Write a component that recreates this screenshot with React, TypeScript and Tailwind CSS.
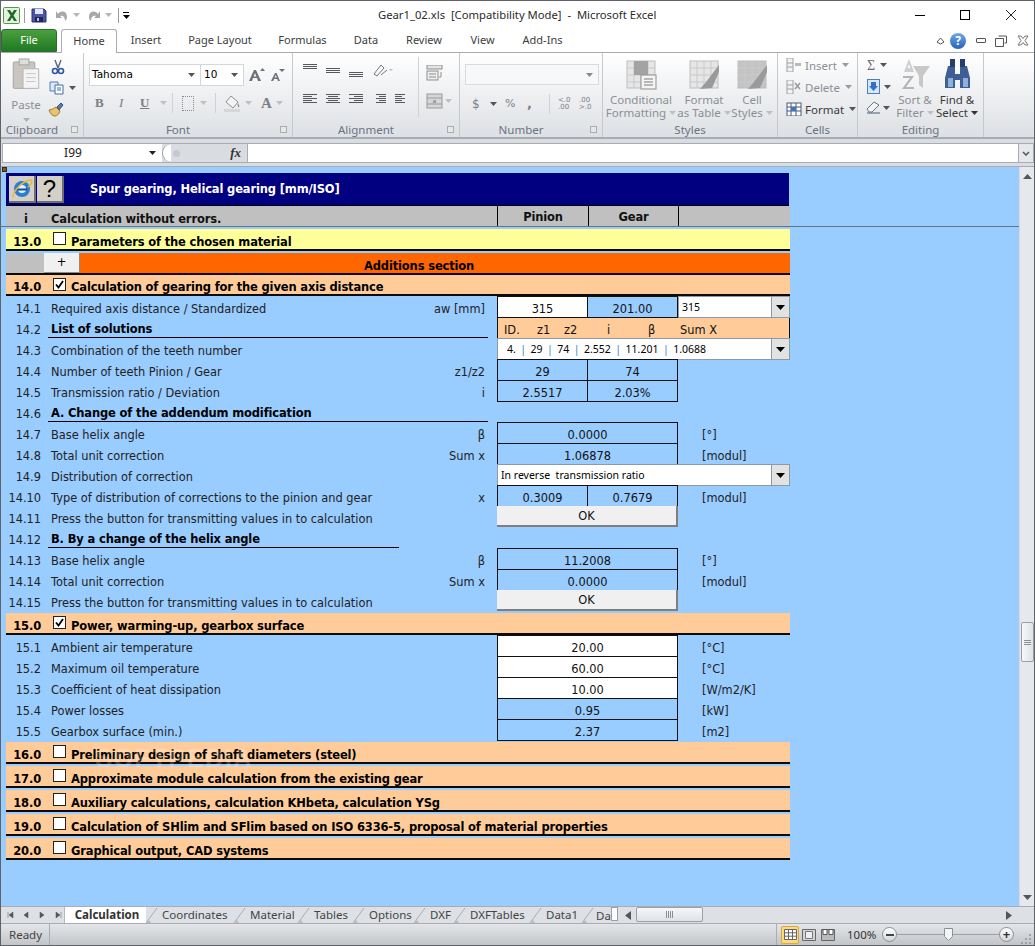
import type { ReactNode } from 'react';

// small drawn icons
const Caret = ({ cls = 'text-[#6b6b6b]' }: { cls?: string }) => (
  <svg width="7" height="4" viewBox="0 0 7 4" className={cls}><path d="M0 0h7L3.5 4z" fill="currentColor" /></svg>
);

const Lines = ({ rows }: { rows: number[][] }) => (
  <svg width="16" height="14" viewBox="0 0 16 14">
    {rows.map((r, i) => (
      <rect key={i} x={r[0]} y={r[2]} width={r[1]} height="1" fill="#55595e" />
    ))}
  </svg>
);

const StyleGrid = ({ brush, tint }: { brush?: boolean; tint?: boolean }) => (
  <svg width="32" height="30" viewBox="0 0 32 30">
    <rect x="2" y="1" width="28" height="27" fill={tint ? '#c4c4c4' : '#e6e6e6'} stroke="#bdbdbd" />
    {[9, 16, 23].map((x) => <path key={x} d={`M${x} 1v27`} stroke="#c9c9c9" />)}
    {[8, 15, 22].map((y) => <path key={y} d={`M2 ${y}h28`} stroke="#c9c9c9" />)}
    {!brush && <rect x="9" y="1" width="14" height="14" fill="#a3a3a3" />}
    {!brush && <rect x="16" y="15" width="15" height="14" fill="#f4f4f4" stroke="#8f8f8f" />}
    {!brush && <path d="M19 19h9M19 22h9M19 25h9" stroke="#7d7d7d" />}
    {brush && <path d="M31 5 L18 22 L12 29 L24 28 L31 12z" fill="#9a9a9a" />}
  </svg>
);

function Group({ w, label, launcher, children }: { w: string; label: string; launcher?: boolean; children: ReactNode }) {
  return (
    <div className={`${w} flex shrink-0 flex-col border-r border-[#c5c9ce]`}>
      <div className="flex h-[71px] min-h-0">{children}</div>
      <div className={`relative flex h-[15px] items-center justify-center text-[11.5px] leading-none text-[#6b7280] ${launcher ? 'pr-[20px]' : ''}`}>
        {label}
        {launcher && <span className="absolute right-[5px] top-[4px] h-[7px] w-[7px] border border-[#a9adb3] bg-[#e8e8e8]" />}
      </div>
    </div>
  );
}

const RibbonText = ({ children, dark }: { children: ReactNode; dark?: boolean }) => (
  <span className={`whitespace-nowrap text-[11.5px] leading-[13px] ${dark ? 'text-[#3a3a3a]' : 'text-[#8b8f94]'}`}>{children}</span>
);

function Ribbon() {
  return (
    <div className="flex h-[86px] shrink-0 border-b-2 border-[#a9adb3] bg-gradient-to-b from-white to-[#dde0e4] font-['Noto_Sans',sans-serif]">
      <Group w="w-[83px]" label="Clipboard" launcher>
        <div className="flex w-[50px] flex-col items-center pt-[5px]">
          <svg width="28" height="32" viewBox="0 0 28 32">
            <rect x="1" y="4" width="22" height="27" rx="1" fill="#c9c5c0" stroke="#a8a5a1" />
            <rect x="7" y="1" width="10" height="6" fill="#dedede" stroke="#a8a5a1" />
            <path d="M11 11h16v20H11z" fill="#f4f4f4" stroke="#b5b5b5" />
            <path d="M14 16h10M14 20h10M14 24h10" stroke="#c8c8c8" />
          </svg>
          <div className="mt-[2px]"><RibbonText>Paste</RibbonText></div>
          <div className="mt-[3px]"><Caret cls="text-[#b0b0b0]" /></div>
        </div>
        <div className="flex flex-col gap-[6px] pt-[6px]">
          <svg width="14" height="16" viewBox="0 0 14 16">
            <path d="M4 1l3 8M10 1L7 9" stroke="#54647c" strokeWidth="1.4" fill="none" />
            <circle cx="4" cy="12" r="2.5" fill="none" stroke="#2f55a4" strokeWidth="1.6" />
            <circle cx="10" cy="12" r="2.5" fill="none" stroke="#2f55a4" strokeWidth="1.6" />
          </svg>
          <div className="flex items-center gap-[4px] -ml-[2px]">
            <svg width="16" height="14" viewBox="0 0 16 14">
              <path d="M1 1h8v9H1z" fill="#dce9f7" stroke="#4f7fb8" />
              <path d="M6 4h8v9H6z" fill="#fff" stroke="#3f6da8" />
              <path d="M8 7h4M8 9h4" stroke="#3f6da8" />
            </svg>
            <Caret cls="text-[#555]" />
          </div>
          <svg width="17" height="16" viewBox="0 0 17 16" className="-ml-[3px]">
            <path d="M1 9c3 0 5-2 7-3l4 4c-1 3-3 5-5 5-3 0-5-3-6-6z" fill="#e8c56a" stroke="#a07f2c" />
            <path d="M9 6l4-4 2 2-4 5z" fill="#5b7bb0" stroke="#33507f" />
          </svg>
        </div>
      </Group>

      <Group w="w-[209px]" label="Font" launcher>
        <div className="flex flex-col gap-[7px] pl-[5px] pt-[11px]">
          <div className="flex items-center">
            <div className="flex h-[22px] w-[112px] items-center justify-between border border-[#d3d6da] bg-white pl-[2px] pr-[5px] font-['DejaVu_Sans',sans-serif] text-[10.5px] text-black">Tahoma<Caret cls="text-[#555]" /></div>
            <div className="flex h-[22px] w-[43px] items-center justify-between border border-l-0 border-[#d3d6da] bg-white pl-[3px] pr-[5px] font-['DejaVu_Sans',sans-serif] text-[10.5px] text-black">10<Caret cls="text-[#555]" /></div>
            <svg width="17" height="14" viewBox="0 0 17 14" className="ml-[4px]">
              <path d="M1 13L6 2h2l5 11h-3l-1-3H5l-1 3zM5.600 8.500h2.800L7 5z" fill="#6d7278" />
              <path d="M12 3l2.500-3L17 3z" fill="#6d7278" />
            </svg>
            <svg width="15" height="13" viewBox="0 0 15 13" className="ml-[5px]">
              <path d="M1 12L5 4h1.500L10 12H8l-.7-2H4l-.8 2zM4.500 8.500h2.300L5.700 6z" fill="#6d7278" />
              <path d="M9 0h6l-3 3z" fill="#6d7278" />
            </svg>
          </div>
          <div className="flex items-center pl-[6px] text-[#7b7f85]">
            <span className="w-[24px] font-['Liberation_Serif',serif] text-[13px] font-bold">B</span>
            <span className="w-[21px] font-['Liberation_Serif',serif] text-[13px] italic">I</span>
            <span className="w-[20px] font-['Liberation_Serif',serif] text-[13px] font-bold underline">U</span>
            <Caret cls="text-[#c0c0c0]" />
            <span className="mx-[5px] h-[20px] w-px bg-[#cfd2d6]" />
            <span className="ml-[4px] mr-[6px] h-[15px] w-[12px] border border-dotted border-[#8b8b8b]" />
            <Caret cls="text-[#c0c0c0]" />
            <span className="mx-[8px] h-[20px] w-px bg-[#cfd2d6]" />
            <svg width="17" height="17" viewBox="0 0 17 17">
              <path d="M7 1l7 6-5 6-7-6z" fill="#f4f4f4" stroke="#8f8f8f" />
              <path d="M14 8c1 2 2 3 1 4s-2-2-1-4z" fill="#909090" />
              <rect x="0" y="14" width="16" height="3" fill="#d6d6d6" />
            </svg>
            <span className="ml-[4px] mr-[9px]"><Caret cls="text-[#c0c0c0]" /></span>
            <span className="font-['Liberation_Serif',serif] text-[15px] font-bold leading-none">A</span>
            <span className="ml-[4px]"><Caret cls="text-[#c0c0c0]" /></span>
          </div>
        </div>
      </Group>

      <Group w="w-[167px]" label="Alignment" launcher>
        <div className="flex flex-col gap-[15px] pl-[9px] pt-[10px]">
          <div className="flex items-center gap-[7px]">
            <Lines rows={[[1, 14, 1], [1, 14, 3], [1, 14, 5]]} />
            <Lines rows={[[1, 14, 5], [1, 14, 7], [1, 14, 9]]} />
            <Lines rows={[[1, 14, 9], [1, 14, 11], [1, 14, 13]]} />
            <svg width="24" height="14" viewBox="0 0 24 14" className="ml-[1px]">
              <path d="M2 11L9 2l3 3-7 8zM9 12l6-5" stroke="#73777d" fill="none" />
              <path d="M17 6l4 0-2 2z" fill="#b9b9b9" />
            </svg>
          </div>
          <div className="flex items-center gap-[7px]">
            <Lines rows={[[1, 14, 2], [1, 9, 4], [1, 14, 6], [1, 9, 8], [1, 14, 10]]} />
            <Lines rows={[[1, 14, 2], [3, 10, 4], [1, 14, 6], [3, 10, 8], [1, 14, 10]]} />
            <Lines rows={[[1, 14, 2], [6, 9, 4], [1, 14, 6], [6, 9, 8], [1, 14, 10]]} />
            <Lines rows={[[5, 10, 2], [8, 7, 4], [5, 10, 6], [8, 7, 8], [5, 10, 10]]} />
            <Lines rows={[[1, 10, 2], [1, 7, 4], [1, 10, 6], [1, 7, 8], [1, 10, 10]]} />
          </div>
        </div>
        <div className="ml-auto mt-[4px] h-[60px] w-px bg-[#cfd2d6]" />
        <div className="flex w-[40px] flex-col gap-[12px] pl-[7px] pt-[12px]">
          <svg width="17" height="16" viewBox="0 0 17 16">
            <rect x="1" y="0" width="15" height="4" fill="#e4e4e4" stroke="#8f8f8f" />
            <rect x="1" y="6" width="11" height="9" fill="#eee" stroke="#8f8f8f" />
            <path d="M3 9h7M3 12h7" stroke="#8f8f8f" />
            <path d="M15 7v5h-2" stroke="#8f8f8f" fill="none" />
          </svg>
          <div className="flex items-center gap-[2px]">
            <svg width="17" height="16" viewBox="0 0 17 16">
              <rect x="1" y="1" width="15" height="14" fill="#d6d6d6" stroke="#9a9a9a" />
              <path d="M1 5h15M1 11h15" stroke="#9a9a9a" />
              <text x="8.5" y="10" fontSize="6" textAnchor="middle" fill="#666">a</text>
            </svg>
            <Caret cls="text-[#c0c0c0]" />
          </div>
        </div>
      </Group>

      <Group w="w-[143px]" label="Number" launcher>
        <div className="flex w-full flex-col gap-[9px] px-[5px] pt-[11px]">
          <div className="flex h-[21px] w-[134px] items-center justify-end border border-[#d9dcdf] bg-[#f7f8f9] pr-[5px]"><Caret cls="text-[#8a8a8a]" /></div>
          <div className="flex items-center pl-[7px] font-['DejaVu_Sans',sans-serif] text-[#7b7f85]">
            <span className="w-[18px] text-[12px]">$</span>
            <Caret cls="text-[#555]" />
            <span className="ml-[8px] w-[22px] text-[11px]">%</span>
            <span className="w-[22px] text-[13px] font-bold">,</span>
            <span className="h-[20px] w-px bg-[#cfd2d6]" />
            <span className="ml-[8px] w-[21px] text-[7px] leading-[7px]">&lt;.0<br />.00</span>
            <span className="w-[18px] text-[7px] leading-[7px]">.00<br />&gt;.0</span>
          </div>
        </div>
      </Group>

      <Group w="w-[175px]" label="Styles">
        <div className="flex w-full pt-[7px]">
          <div className="flex w-[76px] flex-col items-center"><StyleGrid /><div className="mt-[3px] flex flex-col items-center"><RibbonText>Conditional</RibbonText><span className="flex items-center gap-[3px]"><RibbonText>Formatting</RibbonText><Caret cls="text-[#c0c0c0]" /></span></div></div>
          <div className="flex w-[50px] flex-col items-center"><StyleGrid brush /><div className="mt-[3px] flex flex-col items-center"><RibbonText>Format</RibbonText><span className="flex items-center gap-[3px]"><RibbonText>as Table</RibbonText><Caret cls="text-[#c0c0c0]" /></span></div></div>
          <div className="flex w-[46px] flex-col items-center"><StyleGrid brush tint /><div className="mt-[3px] flex flex-col items-center"><RibbonText>Cell</RibbonText><span className="flex items-center gap-[3px]"><RibbonText>Styles</RibbonText><Caret cls="text-[#c0c0c0]" /></span></div></div>
        </div>
      </Group>

      <Group w="w-[80px]" label="Cells">
        <div className="flex flex-col gap-[8px] pl-[8px] pt-[5px]">
          {['Insert', 'Delete', 'Format'].map((t, i) => (
            <div key={t} className="flex h-[14px] items-center gap-[3px]">
              <svg width="16" height="14" viewBox="0 0 16 14">
                <rect x="1" y={i === 2 ? 1 : 0} width={i === 2 ? 14 : 6} height={i === 2 ? 13 : 14} fill={i === 2 ? '#fff' : '#f2f2f2'} stroke={i === 2 ? '#4a5b78' : '#a0a0a0'} />
                <path d={i === 2 ? 'M1 5h14M1 9h14M5 1v13M10 1v13' : 'M1 5h6M1 9h6'} stroke={i === 2 ? '#4a5b78' : '#a0a0a0'} />
                {i === 2 && <rect x="5" y="5" width="5" height="4" fill="#3f74c4" />}
                {i === 0 && <path d="M9 5h6v3H9z" fill="#b9b9b9" />}
                {i === 1 && <path d="M9 3l5 6M14 3l-5 6" stroke="#9a9a9a" strokeWidth="1.5" />}
              </svg>
              <RibbonText dark={i === 2}>{t}</RibbonText>
              <span className="ml-[2px]"><Caret cls={i === 2 ? 'text-[#555]' : 'text-[#9a9a9a]'} /></span>
            </div>
          ))}
        </div>
      </Group>

      <Group w="w-[126px]" label="Editing">
        <div className="flex w-[37px] flex-col gap-[7px] pl-[9px] pt-[5px]">
          <span className="flex h-[14px] items-center gap-[5px] font-['Liberation_Serif',serif] text-[14px] text-[#6d6d6d]">Σ<Caret cls="text-[#555]" /></span>
          <span className="flex items-center gap-[4px]">
            <svg width="13" height="15" viewBox="0 0 13 15"><rect x="0.5" y="0.5" width="12" height="14" fill="#d7e6f8" stroke="#4f7fb8" /><path d="M4 3h5v4h2l-4.500 5-4.500-5h2z" fill="#2f6fc8" /></svg>
            <Caret cls="text-[#555]" />
          </span>
          <span className="flex items-center gap-[2px] -ml-[1px]">
            <svg width="15" height="13" viewBox="0 0 15 13"><path d="M1 8l7-7 5 3-7 7H3z" fill="#f2f4f6" stroke="#6a7585" /><path d="M1 12h13" stroke="#4a5a70" /></svg>
            <Caret cls="text-[#555]" />
          </span>
        </div>
        <div className="flex w-[40px] flex-col items-center pt-[5px]">
          <svg width="31" height="32" viewBox="0 0 31 32">
            <path d="M9 1l5 13H4zM7.500 10h3L9 6z" fill="#cfcfcf" fillRule="evenodd" />
            <path d="M3 18h11l-8 11h8v2H2l8-11H3z" fill="#b5b5b5" />
            <path d="M13 8h17l-7 10v12l-4-3V18z" fill="#c8c8c8" />
          </svg>
          <div className="mt-[3px] flex flex-col items-center"><RibbonText>Sort &amp;</RibbonText><span className="flex items-center gap-[3px]"><RibbonText>Filter</RibbonText><Caret cls="text-[#c0c0c0]" /></span></div>
        </div>
        <div className="flex w-[44px] flex-col items-center pt-[5px]">
          <svg width="29" height="32" viewBox="0 0 29 32">
            <path d="M5 8h7v8h5V8h7l3 12v10H17v-8h-5v8H2V20z" fill="#3d5f94" />
            <rect x="7" y="1" width="5" height="8" fill="#243f6f" />
            <rect x="17" y="1" width="5" height="8" fill="#243f6f" />
            <path d="M5 20h5v9H5zM20 20h5v9h-5z" fill="#8fb0dc" />
          </svg>
          <div className="mt-[3px] flex flex-col items-center"><RibbonText dark>Find &amp;</RibbonText><span className="flex items-center gap-[3px]"><RibbonText dark>Select</RibbonText><Caret cls="text-[#333]" /></span></div>
        </div>
      </Group>
    </div>
  );
}

function TitleBar() {
  return (
    <div className="flex h-[28px] shrink-0 items-center bg-white pl-[2px] font-['Noto_Sans',sans-serif]">
      <svg width="17" height="17" viewBox="0 0 17 17">
        <rect x="0.500" y="0.500" width="16" height="16" rx="1" fill="#e4f1dd" stroke="#4e9a45" />
        <path d="M4 3h3l2 3 2-3h3l-3.500 5.500L14 14h-3l-2-3.500L7 14H4l3.500-5.500z" fill="#1c6e2a" />
      </svg>
      <span className="mx-[4px] h-[15px] w-px bg-[#9a9a9a]" />
      <svg width="16" height="15" viewBox="0 0 16 15" className="ml-[2px]">
        <path d="M1 1h12l2 2v11H1z" fill="#4a55a8" stroke="#2c3378" />
        <rect x="4" y="1" width="8" height="5" fill="#e4e8f5" />
        <rect x="4" y="9" width="8" height="5" fill="#20264f" />
        <rect x="6" y="10" width="2" height="3" fill="#b9c0e6" />
      </svg>
      <svg width="14" height="13" viewBox="0 0 14 13" className="ml-[8px]"><path d="M3 5c3-4 9-3 9 3 0 2-1 3-2 4 0-4-2-6-5-5l2 2H1V2z" fill="#a6a8ab" /></svg>
      <span className="ml-[4px]"><Caret cls="text-[#b5b5b5]" /></span>
      <svg width="14" height="13" viewBox="0 0 14 13" className="ml-[7px]"><path d="M11 5C8 1 2 2 2 8c0 2 1 3 2 4 0-4 2-6 5-5L7 9h6V2z" fill="#a6a8ab" /></svg>
      <span className="ml-[4px]"><Caret cls="text-[#b5b5b5]" /></span>
      <span className="ml-[6px] h-[15px] w-px bg-[#9a9a9a]" />
      <span className="ml-[4px] flex flex-col gap-[2px]"><span className="h-px w-[6px] bg-black" /><Caret cls="text-black" /></span>
      <div className="flex-1 whitespace-pre pl-[248px] text-[11.25px] text-[#2b2b2b]">Gear1_02.xls  [Compatibility Mode]  -  Microsoft Excel</div>
      <span className="h-px w-[10px] bg-black" />
      <span className="ml-[35px] h-[10px] w-[10px] border border-black" />
      <svg width="10" height="10" viewBox="0 0 10 10" className="ml-[36px] mr-[18px]"><path d="M0 0l10 10M10 0L0 10" stroke="#222" /></svg>
    </div>
  );
}

const TABS = [
  { t: 'Insert', w: 'ml-[15px] w-[28px]' },
  { t: 'Page Layout', w: 'ml-[29px] w-[62px]' },
  { t: 'Formulas', w: 'ml-[28px] w-[47px]' },
  { t: 'Data', w: 'ml-[28px] w-[24px]' },
  { t: 'Review', w: 'ml-[28px] w-[36px]' },
  { t: 'View', w: 'ml-[28px] w-[25px]' },
  { t: 'Add-Ins', w: 'ml-[28px] w-[39px]' },
];

function TabStrip() {
  return (
    <div className="flex h-[24px] shrink-0 items-end border-b border-[#a9adb3] bg-white font-['Noto_Sans',sans-serif] text-[11px] text-[#3d3d3d]">
      <div className="flex h-[23px] w-[56px] items-center justify-center rounded-t-[3px] border border-[#2c6e2c] bg-gradient-to-b from-[#4aa03f] to-[#1f7a22] text-white">File</div>
      <div className="relative top-px ml-[4px] flex h-[24px] w-[56px] items-center justify-center rounded-t-[3px] border border-b-0 border-[#a9adb3] bg-white">Home</div>
      {TABS.map((x) => (
        <div key={x.t} className={`${x.w} flex h-[23px] items-center justify-center whitespace-nowrap`}>{x.t}</div>
      ))}
      <div className="ml-auto flex h-[23px] items-center pr-[5px]">
        <svg width="9" height="8" viewBox="0 0 9 8"><path d="M1 5l3.500-4L8 5 4.500 7z" fill="none" stroke="#555" /></svg>
        <span className="ml-[5px] flex h-[16px] w-[16px] items-center justify-center rounded-full bg-gradient-to-b from-[#6ea7e8] to-[#2a62b8] text-[12px] font-bold leading-none text-white">?</span>
        <span className="ml-[10px] h-[5px] w-[10px] rounded-[1px] border border-[#555]" />
        <svg width="12" height="12" viewBox="0 0 12 12" className="ml-[9px]"><path d="M3.500 1h8v7h-2M.5 3.500h8v8h-8z" fill="none" stroke="#555" /></svg>
        <svg width="12" height="11" viewBox="0 0 12 11" className="ml-[10px]"><path d="M1 1h3l2 2.500L8 1h3L8 5.500l3 4.500H8L6 7.500 4 10H1l3-4.500z" fill="none" stroke="#777" /></svg>
      </div>
    </div>
  );
}

function FormulaBar() {
  return (
    <div className="flex h-[27px] shrink-0 items-start bg-[#d9dce0] pt-[4px] font-['Noto_Sans',sans-serif]">
      <div className="ml-[1px] flex h-[20px] w-[160px] items-center border-y border-l border-[#a9adb3] bg-white text-[12px] text-[#222]">
        <span className="w-[146px] pr-[6px] text-center">I99</span>
        <Caret cls="text-[#222]" />
      </div>
      <div className="flex h-[20px] w-[85px] items-center border-y border-[#a9adb3]">
        <span className="h-[18px] w-[9px] rounded-l-full border-l border-[#9aa0a6] bg-white" />
        <span className="ml-[2px] h-[7px] w-[7px] rounded-full bg-[#c5c8cc]" />
        <span className="ml-auto pr-[6px] font-['Liberation_Serif',serif] text-[13px] font-bold italic text-[#333]">fx</span>
      </div>
      <div className="h-[20px] flex-1 border border-[#a9adb3] bg-white" />
      <div className="flex h-[20px] w-[15px] items-center justify-center border-y border-r border-[#a9adb3] bg-[#e6e8eb]">
        <svg width="8" height="5" viewBox="0 0 8 5"><path d="M1 1l3 3 3-3" fill="none" stroke="#555" strokeWidth="1.5" /></svg>
      </div>
    </div>
  );
}

// worksheet bits
const Check = ({ on, cls = '-top-[5px]' }: { on?: boolean; cls?: string }) => (
  <span className={`${cls} relative mx-[5px] flex h-[13px] w-[13px] shrink-0 items-center justify-center border border-[#222] bg-white`}>
    {on && <svg width="9" height="9" viewBox="0 0 9 9"><path d="M1 4.500l2.500 3L8 1" fill="none" stroke="#000" strokeWidth="1.800" /></svg>}
  </span>
);

const BOLD = 'text-[11.5px] font-bold tracking-[-0.15px]';

function Section({ no, title, on, bg = 'bg-[#ffcc99]', gap = true, short }: { no: string; title: string; on?: boolean; bg?: string; gap?: boolean; short?: boolean }) {
  return (
    <div className={`${bg} ${gap ? 'mb-[2px]' : ''} ${short ? 'h-[21px] pt-[6px]' : 'h-[22px] pt-[8px]'} flex w-[784px] items-center border-b-2 border-[#0b0b0b] text-black`}>
      <span className={`${BOLD} w-[35px] text-right`}>{no}</span>
      <span className="w-[7px]" />
      <Check on={on} cls={short ? '-top-[3px]' : '-top-[5px]'} />
      <span className={`${BOLD} whitespace-nowrap`}>{title}</span>
    </div>
  );
}

function Row({ no, label, sym, bold, line, children }: { no: string; label: string; sym?: string; bold?: boolean; line?: string; children?: ReactNode }) {
  return (
    <div className="flex h-[21px] w-[784px] items-start">
      <div className="flex h-[21px] w-[491px] shrink-0 items-start text-[#222]">
        <span className="flex h-[21px] w-[35px] items-center justify-end pt-[6px]">{no}</span>
        <span className="w-[7px]" />
        <div className={`${line ?? ''} flex h-[21px] items-center pl-[3px] pt-[6px] ${bold ? `${BOLD} border-b border-black text-black` : 'w-[440px]'}`}>
          <span className="whitespace-nowrap">{label}</span>
          {sym && <span className="ml-auto pr-[3px]">{sym}</span>}
        </div>
      </div>
      {children}
    </div>
  );
}

const Cell = ({ w = 'w-[91px]', white, children }: { w?: string; white?: boolean; children: ReactNode }) => (
  <div className={`${w} ${white ? 'bg-white' : ''} relative -mr-px flex h-[22px] shrink-0 items-center justify-center border border-[#111] pt-[6px] text-[#111]`}>{children}</div>
);

const Unit = ({ children }: { children: ReactNode }) => <span className="ml-[25px] pt-[5px] text-[#222]">{children}</span>;

const Combo = ({ w, children }: { w: string; children: ReactNode }) => (
  <div className={`${w} relative flex h-[22px] shrink-0 items-center justify-between border border-[#8c99a6] bg-white pl-[3px] font-['Noto_Sans',sans-serif] text-[10.5px] text-black`}>
    <span className="whitespace-pre pt-px">{children}</span>
    <span className="flex h-[20px] w-[18px] items-center justify-center border-l border-[#8c99a6] bg-[#e2e2e2]">
      <svg width="9" height="5" viewBox="0 0 9 5"><path d="M0 0h9L4.500 5z" fill="#000" /></svg>
    </span>
  </div>
);

const OkButton = () => (
  <div className="relative flex h-[21px] w-[181px] shrink-0 items-center justify-center border-b-2 border-r-2 border-[#7f7f7f] bg-[#f0f0f0] pt-[2px] text-[11.4px] text-[#111]">OK</div>
);

const Bar = () => <span className="-mx-px text-[#2f7fc0]">  |  </span>;

function Sheet() {
  return (
    <div className="relative min-h-0 flex-1 overflow-hidden bg-[#99ccff] pt-[6px] font-['DejaVu_Sans',sans-serif] text-[11.4px]">
      <span className="absolute left-[1px] top-0 h-[5px] w-[5px] border border-[#3a2a10] bg-[#7a5a20]" />
      <div className="pl-[5px]">
        <div className="flex h-[33px] w-[783px] items-start gap-[1px] border-b border-black bg-[#000080] pl-[3px] pt-[3px]">
          <div className="flex h-[27px] w-[27px] items-center justify-center border-b-2 border-r-2 border-[#6f6f6f] bg-[#d4d0c8]">
            <svg width="22" height="22" viewBox="0 0 22 22">
              <circle cx="11" cy="11" r="8" fill="#2a7fd4" />
              <circle cx="11" cy="11" r="4" fill="#e4f1fb" />
              <rect x="6" y="10.500" width="10" height="2" fill="#1a4f96" />
              <path d="M2 20C1 15 10 3 20 2c2 1 0 5-3 7" fill="none" stroke="#e8b93a" strokeWidth="1.500" />
            </svg>
          </div>
          <div className="flex h-[27px] w-[27px] items-center justify-center border-b-2 border-r-2 border-[#6f6f6f] bg-[#d4d0c8] font-['Liberation_Sans',sans-serif] text-[24px] leading-none text-black">?</div>
          <span className={`${BOLD} ml-[25px] pt-[5px] text-white`}>Spur gearing, Helical gearing [mm/ISO]</span>
        </div>
      </div>
      <div className="mb-[2px] h-[21px] border-b border-[#69737d] pl-[5px]">
        <div className={`${BOLD} flex h-[20px] w-[784px] items-center bg-[#c0c0c0] text-[#111]`}>
          <span className="w-[40px] pt-[8px] text-center">i</span>
          <span className="w-[451px] pl-[5px] pt-[8px]">Calculation without errors.</span>
          <span className="flex h-[20px] w-[91px] items-center justify-center border-l border-black pt-[3px]">Pinion</span>
          <span className="flex h-[20px] w-[90px] items-center justify-center border-l border-black pt-[3px]">Gear</span>
          <span className="h-[20px] border-l border-black" />
        </div>
      </div>

      <div className="pl-[5px]">
        <Section no="13.0" title="Parameters of the chosen material" bg="bg-[#ffff99]" />
        <div className={`${BOLD} flex h-[22px] w-[784px] border-b-2 border-[#0b0b0b] bg-[#ff6600] text-black`}>
          <span className="w-[38px] bg-[#c0c0c0]" />
          <span className="flex w-[36px] items-center justify-center border-b border-r border-[#8b8b8b] bg-[#f0f0f0] font-normal">+</span>
          <span className="flex-1 pl-[284px] pt-[5px]">Additions section</span>
        </div>
        <Section no="14.0" title="Calculation of gearing for the given axis distance" on gap={false} short />

        <Row no="14.1" label="Required axis distance / Standardized" sym="aw [mm]">
          <Cell white>315</Cell>
          <Cell>201.00</Cell>
          <div className="relative ml-px"><Combo w="w-[112px]">315</Combo></div>
        </Row>
        <Row no="14.2" label="List of solutions" bold line="w-[440px]">
          <div className="flex h-[21px] w-[293px] shrink-0 items-center whitespace-pre border-x border-[#111] bg-[#ffcc99] pl-[6px] pt-[7px] text-[#111]">
            <span className="w-[33px]">ID.</span><span className="w-[27px]">z1</span><span className="w-[43px]">z2</span><span className="w-[41px]">i</span><span className="w-[32px]">β</span><span>Sum X</span>
          </div>
        </Row>
        <Row no="14.3" label="Combination of the teeth number">
          <Combo w="w-[293px]">
            <span className="pl-[6px]">4.</span><Bar />29<Bar />74<Bar />2.552<Bar />11.201<Bar />1.0688
          </Combo>
        </Row>
        <Row no="14.4" label="Number of teeth Pinion / Gear" sym="z1/z2"><Cell>29</Cell><Cell>74</Cell></Row>
        <Row no="14.5" label="Transmission ratio / Deviation" sym="i"><Cell>2.5517</Cell><Cell>2.03%</Cell></Row>
        <Row no="14.6" label="A. Change of the addendum modification" bold line="w-[440px]" />
        <Row no="14.7" label="Base helix angle" sym="β"><Cell w="w-[181px]">0.0000</Cell><Unit>[°]</Unit></Row>
        <Row no="14.8" label="Total unit correction" sym="Sum x"><Cell w="w-[181px]">1.06878</Cell><Unit>[modul]</Unit></Row>
        <Row no="14.9" label="Distribution of correction"><Combo w="w-[293px]">In reverse  transmission ratio</Combo></Row>
        <Row no="14.10" label="Type of distribution of corrections to the pinion and gear" sym="x"><Cell>0.3009</Cell><Cell>0.7679</Cell><Unit>[modul]</Unit></Row>
        <Row no="14.11" label="Press the button for transmitting values in to calculation"><OkButton /></Row>
        <Row no="14.12" label="B. By a change of the helix angle" bold line="w-[351px]" />
        <Row no="14.13" label="Base helix angle" sym="β"><Cell w="w-[181px]">11.2008</Cell><Unit>[°]</Unit></Row>
        <Row no="14.14" label="Total unit correction" sym="Sum x"><Cell w="w-[181px]">0.0000</Cell><Unit>[modul]</Unit></Row>
        <Row no="14.15" label="Press the button for transmitting values in to calculation"><OkButton /></Row>
        <div className="h-[2px]" />

        <Section no="15.0" title="Power, warming-up, gearbox surface" on gap={false} />
        <Row no="15.1" label="Ambient air temperature"><Cell w="w-[181px]" white>20.00</Cell><Unit>[°C]</Unit></Row>
        <Row no="15.2" label="Maximum oil temperature"><Cell w="w-[181px]" white>60.00</Cell><Unit>[°C]</Unit></Row>
        <Row no="15.3" label="Coefficient of heat dissipation"><Cell w="w-[181px]" white>10.00</Cell><Unit>[W/m2/K]</Unit></Row>
        <Row no="15.4" label="Power losses"><Cell w="w-[181px]">0.95</Cell><Unit>[kW]</Unit></Row>
        <Row no="15.5" label="Gearbox surface (min.)"><Cell w="w-[181px]">2.37</Cell><Unit>[m2]</Unit></Row>
        <div className="h-[2px]" />

        <Section no="16.0" title="Preliminary design of shaft diameters (steel)" />
        <Section no="17.0" title="Approximate module calculation from the existing gear" />
        <Section no="18.0" title="Auxiliary calculations, calculation KHbeta, calculation YSg" />
        <Section no="19.0" title="Calculation of SHlim and SFlim based on ISO 6336-5, proposal of material properties" />
        <Section no="20.0" title="Graphical output, CAD systems" />
      </div>
      <span className="pointer-events-none absolute left-[94px] top-[572px] font-['Liberation_Sans',sans-serif] text-[26px] font-bold tracking-[1px] text-white opacity-20">SOFTPEDIA</span>
    </div>
  );
}

function VScroll() {
  return (
    <div className="flex w-[15px] shrink-0 flex-col items-center border-l border-[#d5d8dc] bg-[#e6e8eb]">
      <svg width="9" height="5" viewBox="0 0 9 5" className="mt-[7px]"><path d="M0 5h9L4.500 0z" fill="#555" /></svg>
      <div className="mt-[443px] flex h-[40px] w-[13px] flex-col items-center justify-center gap-px rounded-[2px] border border-[#9aa0a6] bg-gradient-to-r from-[#f6f7f8] to-[#dfe2e6]">
        <span className="h-px w-[7px] bg-[#8a8f95]" /><span className="h-px w-[7px] bg-[#8a8f95]" /><span className="h-px w-[7px] bg-[#8a8f95]" />
      </div>
      <svg width="9" height="5" viewBox="0 0 9 5" className="mt-auto mb-[6px]"><path d="M0 0h9L4.500 5z" fill="#555" /></svg>
    </div>
  );
}

const SHEETS = [
  { t: 'Coordinates', w: 'w-[88px]' },
  { t: 'Material', w: 'w-[64px]' },
  { t: 'Tables', w: 'w-[55px]' },
  { t: 'Options', w: 'w-[61px]' },
  { t: 'DXF', w: 'w-[40px]' },
  { t: 'DXFTables', w: 'w-[76px]' },
  { t: 'Data1', w: 'w-[52px]' },
];

const Slant = () => (
  <svg width="12" height="16" viewBox="0 0 12 16" className="shrink-0">
    <path d="M0 16L11 1" stroke="#a9adb3" fill="none" />
    <path d="M0 16h5l-2-3z" fill="#b9bdc2" />
  </svg>
);

function SheetTabs() {
  return (
    <div className="flex h-[17px] shrink-0 items-stretch border-t border-[#a9adb3] bg-[#dde0e5] font-['Noto_Sans',sans-serif] text-[11.5px] text-[#444]">
      <div className="flex w-[64px] items-center gap-[9px] border-r border-[#b5b9be] pl-[6px] text-[#555]">
        {['M1 1v6M6 1L2 4l4 3z', 'M5 1L1 4l4 3z', 'M1 1l4 3-4 3z', 'M1 1l4 3-4 3zM6 1v6'].map((d) => (
          <svg key={d} width="7" height="8" viewBox="0 0 7 8"><path d={d} fill="currentColor" stroke="currentColor" strokeWidth="0.500" /></svg>
        ))}
      </div>
      <div className="flex w-[81px] items-center justify-center bg-white pl-[3px] font-bold text-[#333]">Calculation</div>
      <Slant />
      {SHEETS.map((s) => (
        <div key={s.t} className={`${s.w} flex items-center justify-between pl-[4px]`}>
          <span className="whitespace-nowrap">{s.t}</span>
          <Slant />
        </div>
      ))}
      <div className="w-[17px] pl-[2px]">Da</div>
      <span className="h-[14px] w-[7px] border border-[#9aa0a6] bg-white" />
      <svg width="6" height="9" viewBox="0 0 6 9" className="ml-[7px] mt-[4px]"><path d="M6 0v9L0 4.500z" fill="#555" /></svg>
      <div className="ml-[5px] flex h-[15px] w-[67px] items-center justify-center gap-px rounded-[2px] border border-[#9aa0a6] bg-gradient-to-b from-[#f6f7f8] to-[#dfe2e6]">
        <span className="h-[7px] w-px bg-[#8a8f95]" /><span className="h-[7px] w-px bg-[#8a8f95]" /><span className="h-[7px] w-px bg-[#8a8f95]" /><span className="h-[7px] w-px bg-[#8a8f95]" />
      </div>
      <svg width="6" height="9" viewBox="0 0 6 9" className="ml-auto mr-[22px] mt-[4px]"><path d="M0 0v9L6 4.500z" fill="#555" /></svg>
    </div>
  );
}

function StatusBar() {
  return (
    <div className="flex h-[22px] shrink-0 items-center border-t border-[#a9adb3] bg-gradient-to-b from-[#e4e6e9] to-[#c2c5c9] font-['Noto_Sans',sans-serif] text-[11.5px] text-[#444]">
      <span className="flex h-full w-[49px] items-center border-r border-[#a9adb3] pl-[8px]">Ready</span>
      <div className="ml-auto flex h-full items-center border-l border-[#a9adb3] pl-[4px] pr-[3px]">
        <span className="flex h-[18px] w-[18px] items-center justify-center rounded-[2px] border border-[#d9a93c] bg-[#fcd97e]">
          <svg width="13" height="11" viewBox="0 0 13 11"><path d="M.5.500h12v10H.5zM.5 3.800h12M.5 7.200h12M4.500.5v10M8.500.5v10" fill="#fff" stroke="#666" /></svg>
        </span>
        <svg width="14" height="12" viewBox="0 0 14 12" className="ml-[3px]"><path d="M.5.500h13v11H.5z" fill="#d5d5d5" stroke="#666" /><path d="M3.500 2.500h7v7h-7z" fill="#eee" stroke="#777" /></svg>
        <svg width="14" height="12" viewBox="0 0 14 12" className="ml-[5px]"><path d="M.5.500h13v11H.5z" fill="#bbb" stroke="#666" /><path d="M2 .5h4v5H2zM8 .5h4v5H8z" fill="#fff" stroke="#555" /></svg>
        <span className="ml-[12px] w-[27px] text-center text-[#333]">100%</span>
        <span className="ml-[8px] flex h-[15px] w-[15px] items-center justify-center rounded-full border border-[#8a8f95] bg-gradient-to-b from-white to-[#d3d6da]"><span className="h-[2px] w-[8px] bg-[#444]" /></span>
        <div className="flex h-px w-[102px] items-center bg-[#9aa0a6] pl-[47px]">
          <svg width="9" height="13" viewBox="0 0 9 13"><path d="M.5.500h8v8l-4 4-4-4z" fill="#f3f3f3" stroke="#8a8f95" /></svg>
        </div>
        <span className="flex h-[15px] w-[15px] items-center justify-center rounded-full border border-[#8a8f95] bg-gradient-to-b from-white to-[#d3d6da] text-[13px] font-bold leading-none text-[#333]">+</span>
        <svg width="10" height="10" viewBox="0 0 10 10" className="ml-[7px] mt-[8px]"><path d="M8 0h2v2H8zM4 4h2v2H4zM8 4h2v2H8zM0 8h2v2H0zM4 8h2v2H4zM8 8h2v2H8z" fill="#9ea2a7" /></svg>
      </div>
    </div>
  );
}

export default function App() {
  return (
    <div className="flex h-[946px] w-[1035px] flex-col overflow-hidden border border-[#5f6368] bg-white">
      <TitleBar />
      <TabStrip />
      <Ribbon />
      <FormulaBar />
      <div className="flex min-h-0 flex-1 border-t border-[#a9adb3]">
        <Sheet />
        <VScroll />
      </div>
      <SheetTabs />
      <StatusBar />
    </div>
  );
}
